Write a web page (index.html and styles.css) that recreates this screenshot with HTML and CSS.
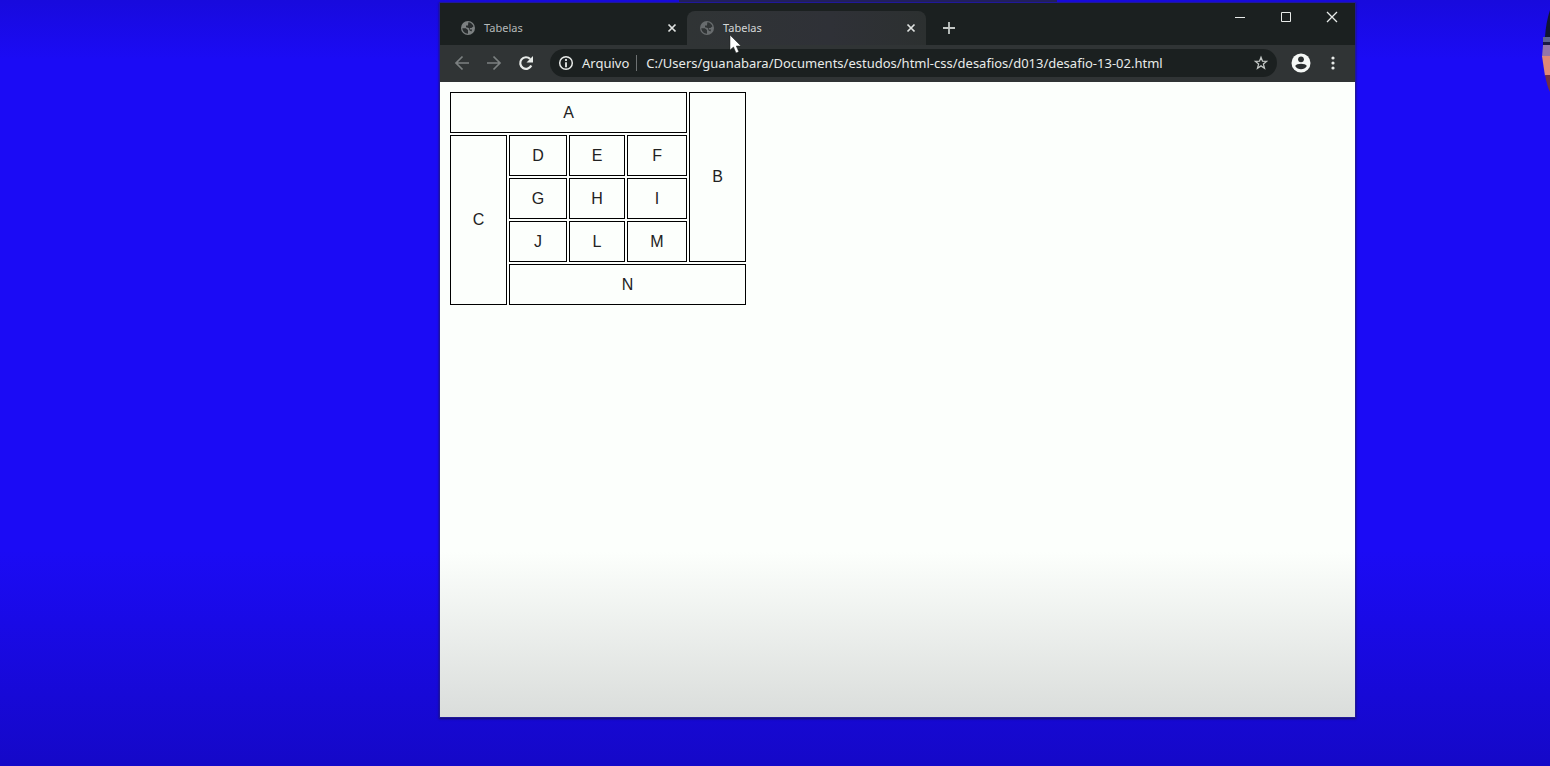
FILE: index.html
```html
<!DOCTYPE html>
<html lang="pt-br">
<head>
<meta charset="UTF-8">
<title>Tabelas</title>
<link rel="stylesheet" href="styles.css">
</head>
<body>
<div class="desktop">
  <div class="window">
    <header class="tabstrip">
      <div class="tab">
        <svg class="globe" viewBox="0 0 16 16" aria-hidden="true"><circle cx="8" cy="8" r="7" fill="#7c8081"/><path d="M2.300 8.300h3.500L8 10v3.800C4.800 13.600 2.400 11.300 2.300 8.300ZM8.300 2.200c2.500.2 4.300 1.600 5.200 4L11.500 8H9.800v1.500h2.400l-.8 2-2-1.200L8.800 8 6 7.300V5.500h2Z" fill="#272b2c"/></svg>
        <span class="tab-title">Tabelas</span>
        <button class="tab-close" aria-label="Fechar guia"><svg viewBox="0 0 10 10"><path d="m1.500 1.500 7 7m0-7-7 7" stroke="currentColor" stroke-width="1.700"/></svg></button>
      </div>
      <div class="tab active">
        <svg class="globe" viewBox="0 0 16 16" aria-hidden="true"><circle cx="8" cy="8" r="7" fill="#686c6e"/><path d="M2.300 8.300h3.500L8 10v3.800C4.800 13.600 2.400 11.300 2.300 8.300ZM8.300 2.200c2.500.2 4.300 1.600 5.200 4L11.500 8H9.800v1.500h2.400l-.8 2-2-1.200L8.800 8 6 7.300V5.500h2Z" fill="#303435"/></svg>
        <span class="tab-title">Tabelas</span>
        <button class="tab-close" aria-label="Fechar guia"><svg viewBox="0 0 10 10"><path d="m1.500 1.500 7 7m0-7-7 7" stroke="currentColor" stroke-width="1.700"/></svg></button>
      </div>
      <button class="new-tab" aria-label="Nova guia"><svg viewBox="0 0 12 12"><path d="M6 0v12M0 6h12" stroke="currentColor" stroke-width="1.800"/></svg></button>
      <div class="controls">
        <button aria-label="Minimizar"><svg viewBox="0 0 12 12"><path d="M1 6.500h10" stroke="currentColor"/></svg></button>
        <button aria-label="Maximizar"><svg viewBox="0 0 12 12"><path d="M1.500 1.500h9v9h-9z" fill="none" stroke="currentColor"/></svg></button>
        <button aria-label="Fechar"><svg viewBox="0 0 12 12"><path d="m1 1 10 10m0-10L1 11" stroke="currentColor" stroke-width="1.300"/></svg></button>
      </div>
    </header>
    <nav class="toolbar">
      <button class="nav dim" aria-label="Voltar"><svg viewBox="0 0 16 16"><path d="M15 8H2m6.500-6.500L2 8l6.500 6.500" fill="none" stroke="currentColor" stroke-width="1.700"/></svg></button>
      <button class="nav dim" aria-label="Avançar"><svg viewBox="0 0 16 16"><path d="M1 8h13M7.500 1.500 14 8l-6.500 6.500" fill="none" stroke="currentColor" stroke-width="1.700"/></svg></button>
      <button class="nav" aria-label="Recarregar"><svg viewBox="0 0 16 16"><path d="M13.300 10.500A5.800 5.800 0 1 1 12.200 4" fill="none" stroke="currentColor" stroke-width="2.200"/><path d="M15 1v6.500H8.500Z" fill="currentColor"/></svg></button>
      <div class="omnibox">
        <svg class="info" viewBox="0 0 16 16" aria-hidden="true"><circle cx="8" cy="8" r="6.300" fill="none" stroke="currentColor" stroke-width="1.500"/><path d="M8 4v2m0 1.300v5" stroke="currentColor" stroke-width="1.800"/></svg>
        <label class="scheme" for="url">Arquivo</label>
        <input class="url" id="url" type="text" value="C:/Users/guanabara/Documents/estudos/html-css/desafios/d013/desafio-13-02.html">
        <button class="star" aria-label="Favoritos"><svg viewBox="0 0 16 16"><path d="m8 2.300 1.500 3.900 4.100.2-3.200 2.700 1.100 4.100L8 10.900l-3.500 2.300 1.100-4.100-3.200-2.700 4.100-.2Z" fill="none" stroke="currentColor" stroke-width="1.300"/></svg></button>
      </div>
      <button class="profile" aria-label="Perfil"><svg viewBox="0 0 20 20"><circle cx="10" cy="10" r="9.500" fill="#f5f8f6"/><circle cx="10" cy="6.300" r="2.900" fill="#2b2f30"/><path d="M4.200 13c1.200-3 10.400-3 11.600 0-2.500 4.300-9.100 4.300-11.600 0Z" fill="#2b2f30"/></svg></button>
      <button class="more" aria-label="Mais opções"><svg viewBox="0 0 4 14"><circle cx="2" cy="2" r="1.600"/><circle cx="2" cy="7" r="1.600"/><circle cx="2" cy="12" r="1.600"/></svg></button>
    </nav>
    <main class="page">
      <table class="grid">
        <colgroup><col class="col-c"><col class="col-d"><col class="col-e"><col class="col-f"><col class="col-b"></colgroup>
        <tbody>
          <tr><td colspan="4">A</td><td rowspan="4">B</td></tr>
          <tr><td rowspan="4">C</td><td>D</td><td>E</td><td>F</td></tr>
          <tr><td>G</td><td>H</td><td>I</td></tr>
          <tr><td>J</td><td>L</td><td>M</td></tr>
          <tr><td colspan="4">N</td></tr>
        </tbody>
      </table>
    </main>
  </div>
  <div class="top-edge"></div>
  <svg class="pointer" viewBox="0 0 13 20" aria-hidden="true"><path d="M1 0v15l3.500-3 2.500 6 2.800-1.200L7.300 11H12Z" fill="#fff" stroke="#1b1e1f" stroke-width=".5"/></svg>
  <svg class="presenter" viewBox="0 0 8 84" aria-hidden="true"><path d="M8 0Q4 12 3 27h5Z" fill="#101532"/><path d="M1 27h7v5H1Z" fill="#5d6290"/><path d="M1 32h7v4H1Z" fill="#1b1a44"/><path d="M1 35h7v12H0Z" fill="#9475a8"/><path d="M0 46h8v20H3Z" fill="#df8876"/><path d="M3 65h5v17Q5 76 3 65Z" fill="#713044"/></svg>
</div>
</body>
</html>
```

FILE: styles.css
```css
* {
  box-sizing: border-box;
}

body {
  margin: 0;
  font-family: "Noto Sans", "Open Sans", sans-serif;
}

button {
  display: flex;
  align-items: center;
  justify-content: center;
  padding: 0;
  border: 0;
  background: none;
  color: inherit;
}

svg {
  display: block;
}

.desktop {
  position: relative;
  display: flex;
  min-height: 100vh;
  padding: 3px 195px 49px 440px;
  overflow: hidden;
  background: linear-gradient(#180add 0, #1b0bf5 60px, #1b0bf5 550px, #1508c8 100%);
}

.window {
  display: flex;
  flex: 1;
  flex-direction: column;
  min-width: 0;
  box-shadow: 0 0 0 1px #20189a, 0 1px 2px 1px #171060;
  color: #e8ebe9;
}

.tabstrip {
  display: flex;
  height: 42px;
  padding: 8px 0 0 8px;
  background: #1b2020;
}

.tab {
  display: flex;
  align-items: center;
  flex: 0 1 239px;
  padding: 0 7px 0 12px;
  border-radius: 8px 8px 0 0;
  color: #b5b9b9;
  font-size: 11px;
}

.tab.active {
  background: linear-gradient(90deg, #303435, #2f3137 60%, #2c3030);
  color: #d4d7d7;
}

.globe {
  width: 16px;
  height: 16px;
  margin-right: 8px;
}

.tab-title {
  flex: 1;
  padding-bottom: 2px;
}

.tab-close {
  width: 16px;
  height: 16px;
  color: #e0e3e1;
}

.tab-close svg {
  width: 10px;
  height: 10px;
}

.new-tab {
  width: 28px;
  height: 34px;
  margin-left: 9px;
  color: #c3c7c5;
}

.new-tab svg,
.controls svg {
  width: 12px;
  height: 12px;
}

.controls {
  display: flex;
  align-self: flex-start;
  margin-top: -8px;
  margin-left: auto;
}

.controls button {
  width: 46px;
  height: 28px;
}

.toolbar {
  display: flex;
  align-items: center;
  height: 37px;
  padding: 0 12px 1px 6px;
  background: #303435;
}

.nav {
  width: 32px;
  height: 32px;
}

.nav svg {
  width: 16px;
  height: 16px;
}

.nav.dim {
  color: #7c8081;
}

.omnibox {
  display: flex;
  align-items: center;
  flex: 1;
  height: 28px;
  margin-left: 8px;
  padding: 0 8px;
  border-radius: 14px;
  background: #1b2020;
  font-size: 13px;
}

.info {
  width: 16px;
  height: 16px;
  margin-right: 8px;
}

.scheme {
  padding-right: 7px;
  border-right: 1px solid #6d7172;
  line-height: 16px;
}

.url {
  flex: 1;
  min-width: 0;
  padding: 0 0 0 9px;
  border: 0;
  outline: 0;
  background: none;
  color: inherit;
  font: inherit;
}

.star {
  color: #c3c7c5;
}

.star svg {
  width: 16px;
  height: 16px;
}

.profile {
  width: 32px;
  margin-left: 8px;
}

.profile svg {
  width: 20px;
  height: 20px;
}

.more {
  width: 20px;
  margin-left: 6px;
}

.more svg {
  width: 4px;
  height: 14px;
  fill: currentColor;
}

.page {
  flex: 1;
  padding: 8px;
  background: linear-gradient(#fcfffc 0, #fcfffc 470px, #dadddb 100%);
}

.grid {
  width: 300px;
  border-spacing: 2px;
  table-layout: fixed;
  color: #222;
  font-family: "Liberation Sans", Arial, sans-serif;
  font-size: 16px;
  text-align: center;
}

.col-c,
.col-b {
  width: 57px;
}

.col-d {
  width: 58px;
}

.col-e {
  width: 56px;
}

.col-f {
  width: 60px;
}

.grid tr {
  height: 41px;
}

.grid td {
  padding: 0;
  border: 1px solid #000;
}

.top-edge {
  position: absolute;
  top: 0;
  left: 679px;
  width: 378px;
  height: 2px;
  background: #22205c;
}

.pointer {
  position: absolute;
  top: 35px;
  left: 729px;
  width: 13px;
  height: 20px;
}

.presenter {
  position: absolute;
  top: 10px;
  right: 0;
  width: 8px;
  height: 84px;
}
```
